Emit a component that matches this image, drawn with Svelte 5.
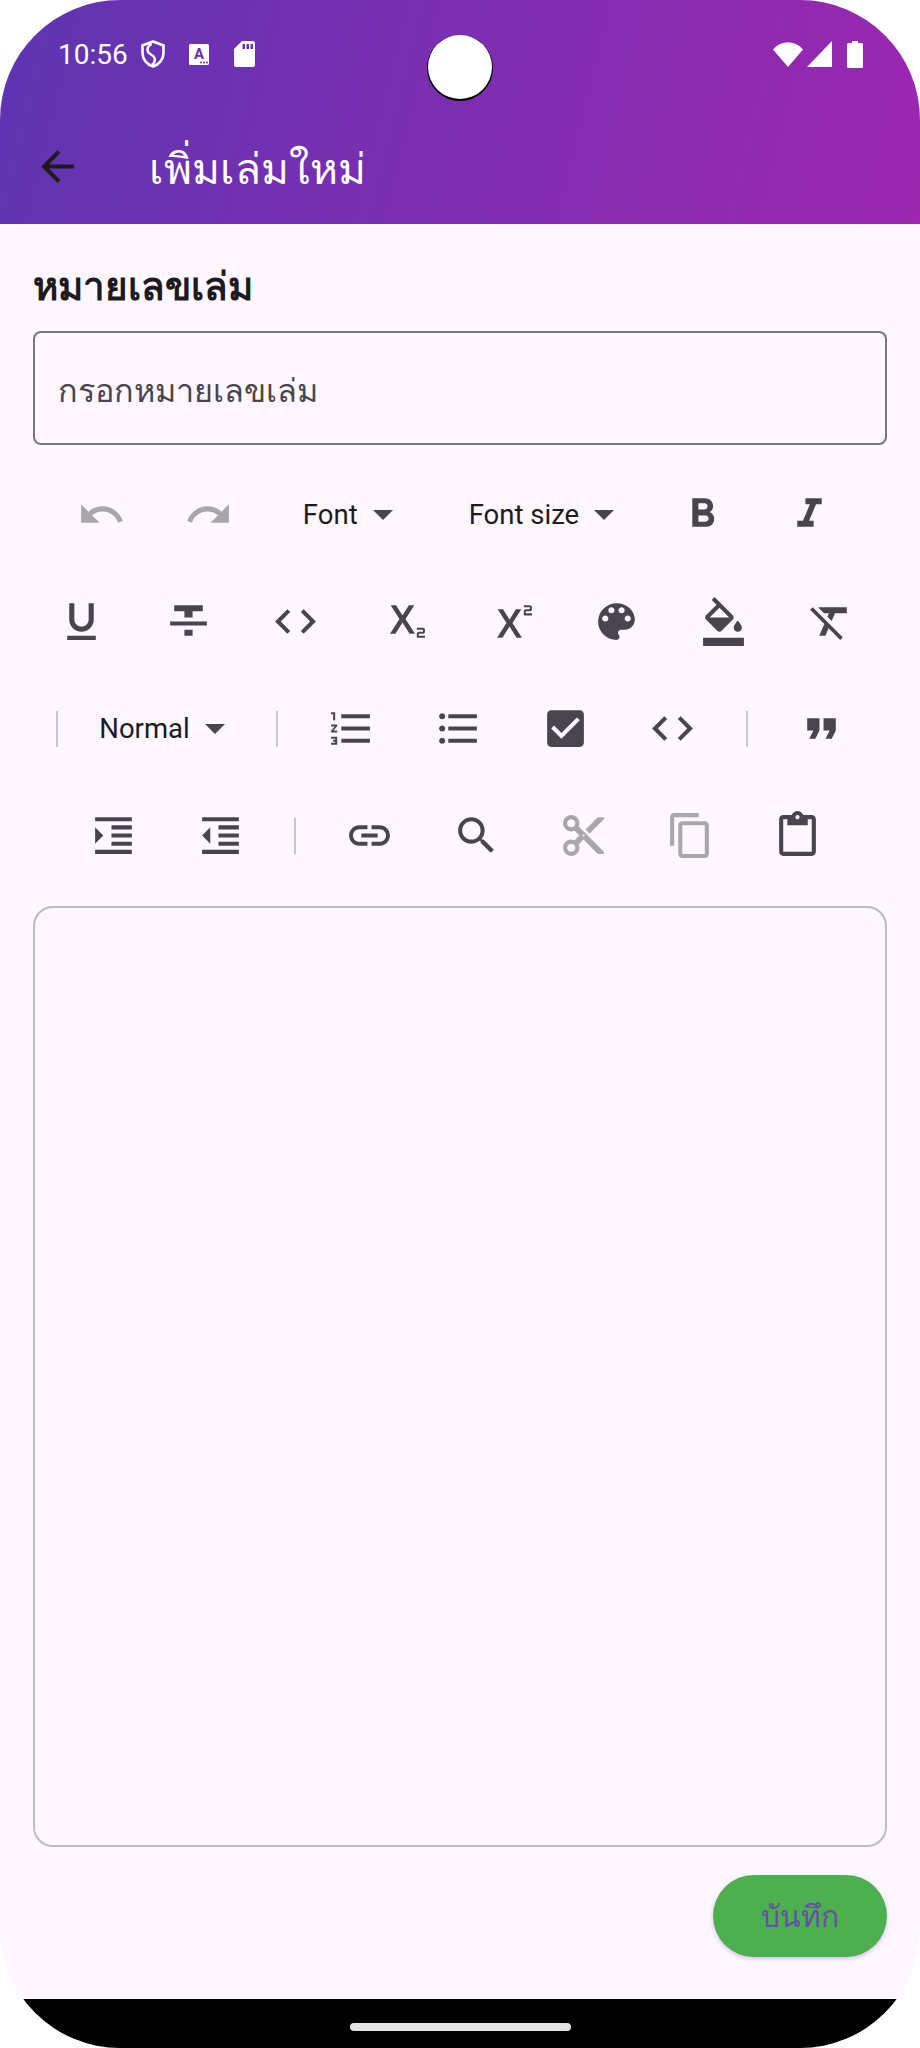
<script>
  // material icon paths, 24x24 box
  const icons = {
    undo: 'M12.5 8c-2.65 0-5.05.99-6.9 2.6L2 7v9h9l-3.62-3.62c1.39-1.16 3.16-1.88 5.12-1.88 3.54 0 6.55 2.31 7.6 5.5l2.37-.78C21.08 11.03 17.15 8 12.5 8z',
    redo: 'M18.4 10.6C16.55 8.99 14.15 8 11.5 8c-4.65 0-8.58 3.03-9.96 7.22L3.9 16c1.05-3.19 4.05-5.5 7.6-5.5 1.95 0 3.73.72 5.12 1.88L13 16h9V7l-3.6 3.6z',
    bold: 'M15.6 10.79c.97-.67 1.65-1.77 1.65-2.79 0-2.26-1.75-4-4-4H7v14h7.04c2.09 0 3.71-1.7 3.71-3.79 0-1.52-.86-2.82-2.15-3.42zM10 6.5h3c.83 0 1.5.67 1.5 1.5s-.67 1.5-1.5 1.5h-3v-3zm3.5 9H10v-3h3.5c.83 0 1.5.67 1.5 1.5s-.67 1.5-1.5 1.5z',
    italic: 'M10 4v3h2.21l-3.42 8H6v3h8v-3h-2.21l3.42-8H18V4z',
    underline: 'M12 17c3.31 0 6-2.69 6-6V3h-2.5v8c0 1.93-1.57 3.5-3.5 3.5S8.5 12.93 8.5 11V3H6v8c0 3.31 2.69 6 6 6zm-7 2v2h14v-2H5z',
    strike: 'M10 19h4v-3h-4v3zM5 4v3h5v3h4V7h5V4H5zM3 14h18v-2H3v2z',
    code: 'M9.4 16.6L4.8 12l4.6-4.6L8 6l-6 6 6 6 1.4-1.4zm5.2 0l4.6-4.6-4.6-4.6L16 6l6 6-6 6-1.4-1.4z',
    sub: 'M22 18h-2v1h3v1h-4v-2c0-.55.45-1 1-1h2v-1h-3v-1h3c.55 0 1 .45 1 1v1c0 .55-.45 1-1 1zM5.88 18h2.66l3.4-5.42h.12l3.4 5.42h2.66l-4.65-7.27L17.81 4h-2.68l-3.07 4.99h-.12L8.85 4H6.19l4.32 6.73L5.88 18z',
    sup: 'M22 7h-2v1h3v1h-4V7c0-.55.45-1 1-1h2V5h-3V4h3c.55 0 1 .45 1 1v1c0 .55-.45 1-1 1zM5.88 20h2.66l3.4-5.42h.12l3.4 5.42h2.66l-4.65-7.27L17.81 6h-2.68l-3.07 4.99h-.12L8.85 6H6.19l4.32 6.73L5.88 20z',
    palette: 'M12 3c-4.97 0-9 4.03-9 9s4.03 9 9 9c.83 0 1.5-.67 1.5-1.5 0-.39-.15-.74-.39-1.01-.23-.26-.38-.61-.38-.99 0-.83.67-1.5 1.5-1.5H16c2.76 0 5-2.24 5-5 0-4.42-4.03-8-9-8zm-5.5 9c-.83 0-1.5-.67-1.5-1.5S5.67 9 6.5 9 8 9.67 8 10.5 7.33 12 6.5 12zm3-4C8.67 8 8 7.33 8 6.5S8.67 5 9.5 5s1.5.67 1.5 1.5S10.33 8 9.5 8zm5 0c-.83 0-1.5-.67-1.5-1.5S13.67 5 14.5 5s1.5.67 1.5 1.5S15.33 8 14.5 8zm3 4c-.83 0-1.5-.67-1.5-1.5S16.67 9 17.5 9s1.5.67 1.5 1.5-.67 1.5-1.5 1.5z',
    fill: 'M16.56 8.94L7.62 0 6.21 1.41l2.38 2.38-5.15 5.15c-.59.59-.59 1.54 0 2.12l5.5 5.5c.29.29.68.44 1.06.44s.77-.15 1.06-.44l5.5-5.5c.59-.58.59-1.53 0-2.12zM5.21 10L10 5.21 14.79 10H5.21zM19 11.5s-2 2.17-2 3.5c0 1.1.9 2 2 2s2-.9 2-2c0-1.33-2-3.5-2-3.5zM2 20h20v4H2z',
    clear: 'M3.27 5L2 6.27l6.97 6.97L6.5 19h3l1.57-3.66L16.73 21 18 19.73 3.55 5.27 3.27 5zM6 5v.18L8.82 8h2.4l-.72 1.68 2.1 2.1L14.21 8H20V5H6z',
    ol: 'M2 17h2v.5H3v1h1v.5H2v1h3v-4H2v1zm1-9h1V4H2v1h1v3zm-1 3h1.8L2 13.1v.9h3v-1H3.2L5 10.9V10H2v1zm5-6v2h14V5H7zm0 14h14v-2H7v2zm0-6h14v-2H7v2z',
    ul: 'M4 10.5c-.83 0-1.5.67-1.5 1.5s.67 1.5 1.5 1.5 1.5-.67 1.5-1.5-.67-1.5-1.5-1.5zm0-6c-.83 0-1.5.67-1.5 1.5S3.17 7.5 4 7.5 5.5 6.83 5.5 6 4.83 4.5 4 4.5zm0 12c-.83 0-1.5.68-1.5 1.5s.68 1.5 1.5 1.5 1.5-.68 1.5-1.5-.67-1.5-1.5-1.5zM7 19h14v-2H7v2zm0-6h14v-2H7v2zm0-8v2h14V5H7z',
    check: 'M19 3H5c-1.11 0-2 .9-2 2v14c0 1.1.89 2 2 2h14c1.11 0 2-.9 2-2V5c0-1.1-.89-2-2-2zm-9 14l-5-5 1.41-1.41L10 14.17l7.59-7.59L19 8l-9 9z',
    quote: 'M6 17h3l2-4V7H5v6h3zm8 0h3l2-4V7h-6v6h3z',
    indent: 'M3 21h18v-2H3v2zM3 8v8l4-4-4-4zm8 9h10v-2H11v2zM3 3v2h18V3H3zm8 6h10V7H11v2zm0 4h10v-2H11v2z',
    outdent: 'M11 17h10v-2H11v2zm-8-5l4 4V8l-4 4zm0 9h18v-2H3v2zM3 3v2h18V3H3zm8 6h10V7H11v2zm0 4h10v-2H11v2z',
    link: 'M3.9 12c0-1.71 1.39-3.1 3.1-3.1h4V7H7c-2.76 0-5 2.24-5 5s2.24 5 5 5h4v-1.9H7c-1.71 0-3.1-1.39-3.1-3.1zM8 13h8v-2H8v2zm9-6h-4v1.9h4c1.71 0 3.1 1.39 3.1 3.1s-1.39 3.1-3.1 3.1h-4V17h4c2.76 0 5-2.24 5-5s-2.24-5-5-5z',
    search: 'M15.5 14h-.79l-.28-.27C15.41 12.59 16 11.11 16 9.5 16 5.91 13.09 3 9.5 3S3 5.91 3 9.5 5.91 16 9.5 16c1.61 0 3.09-.59 4.23-1.57l.27.28v.79l5 4.99L20.49 19l-4.99-5zm-6 0C7.01 14 5 11.99 5 9.5S7.01 5 9.5 5 14 7.01 14 9.5 11.99 14 9.5 14z',
    cut: 'M9.64 7.64c.23-.5.36-1.05.36-1.64 0-2.21-1.79-4-4-4S2 3.79 2 6s1.79 4 4 4c.59 0 1.14-.13 1.64-.36L10 12l-2.36 2.36C7.14 14.13 6.59 14 6 14c-2.21 0-4 1.79-4 4s1.79 4 4 4 4-1.79 4-4c0-.59-.13-1.14-.36-1.64L12 14l7 7h3v-1L9.64 7.64zM6 8c-1.1 0-2-.89-2-2s.9-2 2-2 2 .89 2 2-.9 2-2 2zm0 12c-1.1 0-2-.89-2-2s.9-2 2-2 2 .89 2 2-.9 2-2 2zm6-7.5c-.28 0-.5-.22-.5-.5s.22-.5.5-.5.5.22.5.5-.22.5-.5.5zM19 3l-6 6 2 2 7-7V3z',
    copy: 'M16 1H4c-1.1 0-2 .9-2 2v14h2V3h12V1zm3 4H8c-1.1 0-2 .9-2 2v14c0 1.1.9 2 2 2h11c1.1 0 2-.9 2-2V7c0-1.1-.9-2-2-2zm0 16H8V7h11v14z',
    paste: 'M19 2h-4.18C14.4.84 13.3 0 12 0c-1.3 0-2.4.84-2.82 2H5c-1.1 0-2 .9-2 2v16c0 1.1.9 2 2 2h14c1.1 0 2-.9 2-2V4c0-1.1-.9-2-2-2zm-7 0c.55 0 1 .45 1 1s-.45 1-1 1-1-.45-1-1 .45-1 1-1zm7 18H5V4h2v3h10V4h2v16z'
  };

  const rows = [
    [
      { icon: 'undo', off: true },
      { icon: 'redo', off: true },
      { drop: 'Font' },
      { drop: 'Font size' },
      { icon: 'bold' },
      { icon: 'italic' }
    ],
    ['underline', 'strike', 'code', 'sub', 'sup', 'palette', 'fill', 'clear'].map((icon) => ({ icon })),
    [
      { sep: true },
      { drop: 'Normal', tight: true },
      { sep: true },
      { icon: 'ol' },
      { icon: 'ul' },
      { icon: 'check' },
      { icon: 'code' },
      { sep: true },
      { icon: 'quote' }
    ],
    [
      { icon: 'indent' },
      { icon: 'outdent' },
      { sep: true },
      { icon: 'link' },
      { icon: 'search' },
      { icon: 'cut', off: true },
      { icon: 'copy', off: true },
      { icon: 'paste' }
    ]
  ];
</script>

<div class="phone">
  <header class="appbar">
    <div class="status">
      <span class="time">10:56</span>
      <svg class="shield" viewBox="0 0 24 28">
        <path d="M12 1.500 22.500 5.500V13c0 6.200-4.300 11.500-10.500 13.500C5.800 24.500 1.500 19.200 1.500 13V5.500Z" fill="none" stroke="#fff" stroke-width="2.600" />
        <path d="M10.500 4C5 7 5.500 12 10 14.500C14.500 17 15.500 21 11 25" fill="none" stroke="#fff" stroke-width="2.400" />
      </svg>
      <svg class="sim" viewBox="0 0 20 21">
        <rect width="20" height="21" rx="1.500" fill="#fff" />
        <text x="10" y="14.500" text-anchor="middle" class="sim-letter">A</text>
        <circle cx="12" cy="18.500" r="1" fill="#6a30ad" />
        <circle cx="15" cy="18.500" r="1" fill="#6a30ad" />
        <circle cx="18" cy="18.500" r="1" fill="#6a30ad" />
      </svg>
      <svg class="sd" viewBox="0 0 21 26">
        <path d="M8 0H19a2 2 0 0 1 2 2V24a2 2 0 0 1-2 2H2a2 2 0 0 1-2-2V8Z" fill="#fff" />
        <path d="M8.500 3h2.500v5H8.500zM12.500 3H15v5h-2.500zM16.500 3H19v5h-2.500z" fill="#6a30ad" />
      </svg>
      <span class="spring"></span>
      <svg class="wifi" viewBox="0 0 30 25">
        <path d="M0 7.500C4 3 9 .5 15 .5S26 3 30 7.500L15 25Z" fill="#fff" />
      </svg>
      <svg class="signal" viewBox="0 0 25 26">
        <path d="M25 0V26H0Z" fill="#fff" />
      </svg>
      <svg class="battery" viewBox="0 0 16 27">
        <path d="M5 0H11V2H14.500A1.500 1.500 0 0 1 16 3.500V25.500A1.500 1.500 0 0 1 14.500 27H1.500A1.500 1.500 0 0 1 0 25.500V3.500A1.500 1.500 0 0 1 1.500 2H5Z" fill="#fff" />
      </svg>
    </div>
    <div class="bar">
      <svg class="back" viewBox="0 0 24 24"><path d="M20 11H7.830l5.590-5.590L12 4l-8 8 8 8 1.410-1.410L7.830 13H20v-2z" /></svg>
      <h1>เพิ่มเล่มใหม่</h1>
    </div>
    <div class="camera"></div>
  </header>

  <main class="page">
    <div class="label">หมายเลขเล่ม</div>
    <div class="input">กรอกหมายเลขเล่ม</div>

    <div class="toolbar">
      {#each rows as row}
        <div class="row">
          {#each row as item}
            {#if item.sep}
              <span class="sep"></span>
            {:else if item.drop}
              <span class="drop" class:tight={item.tight}>
                {item.drop}
                <svg class="caret" viewBox="0 0 20 10"><path d="M0 0h20L10 10z" /></svg>
              </span>
            {:else}
              <span class="btn" class:off={item.off}>
                <svg viewBox="0 0 24 24"><path d={icons[item.icon]} /></svg>
              </span>
            {/if}
          {/each}
        </div>
      {/each}
    </div>

    <div class="editor"></div>

    <div class="actions">
      <button class="save">บันทึก</button>
    </div>
  </main>

  <footer class="nav"><span class="pill"></span></footer>
</div>

<style>
  :global(body) {
    background: #fff;
  }

  .phone {
    width: 920px;
    height: 2048px;
    display: flex;
    flex-direction: column;
    border-radius: 120px;
    overflow: hidden;
    background: #fef7ff;
    font-family: Roboto, "Noto Sans", sans-serif;
  }

  .appbar {
    position: relative;
    height: 224px;
    flex: none;
    box-sizing: border-box;
    padding: 37px 57px 0 58px;
    background: linear-gradient(104deg, #5e35b1, #9c27b0);
  }

  .status {
    display: flex;
    align-items: center;
    height: 34px;
  }

  .time {
    font-size: 28px;
    color: #fff;
    margin-right: 13px;
  }

  .shield {
    width: 24px;
    height: 28px;
    margin-right: 24px;
  }

  .sim {
    width: 20px;
    height: 21px;
    margin-right: 25px;
  }

  .sim-letter {
    font-size: 15px;
    font-weight: 700;
    font-family: Roboto, sans-serif;
    fill: #6a30ad;
  }

  .sd {
    width: 21px;
    height: 26px;
  }

  .spring {
    flex: 1;
  }

  .wifi {
    width: 30px;
    height: 25px;
    margin-right: 4px;
  }

  .signal {
    width: 25px;
    height: 26px;
    margin-right: 15px;
  }

  .battery {
    width: 16px;
    height: 27px;
  }

  .bar {
    display: flex;
    align-items: center;
    margin: 62px 0 0 -25px;
    height: 66px;
  }

  .back {
    width: 49px;
    height: 49px;
    fill: #1d1b20;
    margin-right: 67px;
  }

  h1 {
    margin: 6px 0 0;
    font-size: 42.5px;
    font-weight: 400;
    color: #fff;
    white-space: nowrap;
  }

  .camera {
    position: absolute;
    left: 428px;
    top: 35px;
    width: 64px;
    height: 64px;
    border-radius: 50%;
    background: #fff;
    box-shadow: 0 1px 0 1px #000;
  }

  .page {
    flex: 1;
    display: flex;
    flex-direction: column;
    box-sizing: border-box;
    padding: 0 33px;
  }

  .label {
    margin-top: 38px;
    height: 69px;
    font-size: 38.5px;
    font-weight: 700;
    line-height: 50px;
    color: #1d1b20;
  }

  .input {
    box-sizing: border-box;
    height: 114px;
    display: flex;
    align-items: center;
    padding: 5px 23px 0;
    border: 2px solid #79747e;
    border-radius: 8px;
    font-size: 32.4px;
    color: #49454f;
  }

  .toolbar {
    margin: 16px -33px 0;
    padding-right: 9px;
  }

  .row {
    display: flex;
    justify-content: center;
    align-items: center;
    height: 107px;
  }

  .btn {
    width: 107px;
    display: flex;
    justify-content: center;
  }

  .btn svg {
    width: 49px;
    height: 49px;
    fill: #49454f;
  }

  .btn.off svg {
    fill: #aaa6ac;
  }

  .drop {
    display: flex;
    align-items: center;
    padding: 0 35px 0 41px;
    font-size: 27.5px;
    color: #1d1b20;
  }

  .drop.tight {
    padding: 0 31px 0 21px;
  }

  .caret {
    width: 20px;
    height: 10px;
    margin-left: 15px;
    fill: #49454f;
  }

  .sep {
    width: 2px;
    height: 36px;
    margin: 0 20px;
    background: #cac4d0;
  }

  .editor {
    margin-top: 17px;
    height: 941px;
    box-sizing: border-box;
    border: 2px solid #bdbabd;
    border-radius: 20px;
  }

  .actions {
    display: flex;
    justify-content: flex-end;
    margin-top: 28px;
  }

  .save {
    width: 174px;
    height: 82px;
    border: none;
    border-radius: 41px;
    background: #4caf50;
    color: #6750a4;
    font-family: inherit;
    font-size: 30px;
    box-shadow: 0 2px 4px rgba(103, 80, 164, 0.3);
  }

  .nav {
    flex: none;
    height: 49px;
    background: #000;
    display: flex;
    justify-content: center;
    align-items: center;
  }

  .pill {
    width: 221px;
    height: 8px;
    border-radius: 4px;
    background: #e3e3e3;
    margin-top: 7px;
  }
</style>
